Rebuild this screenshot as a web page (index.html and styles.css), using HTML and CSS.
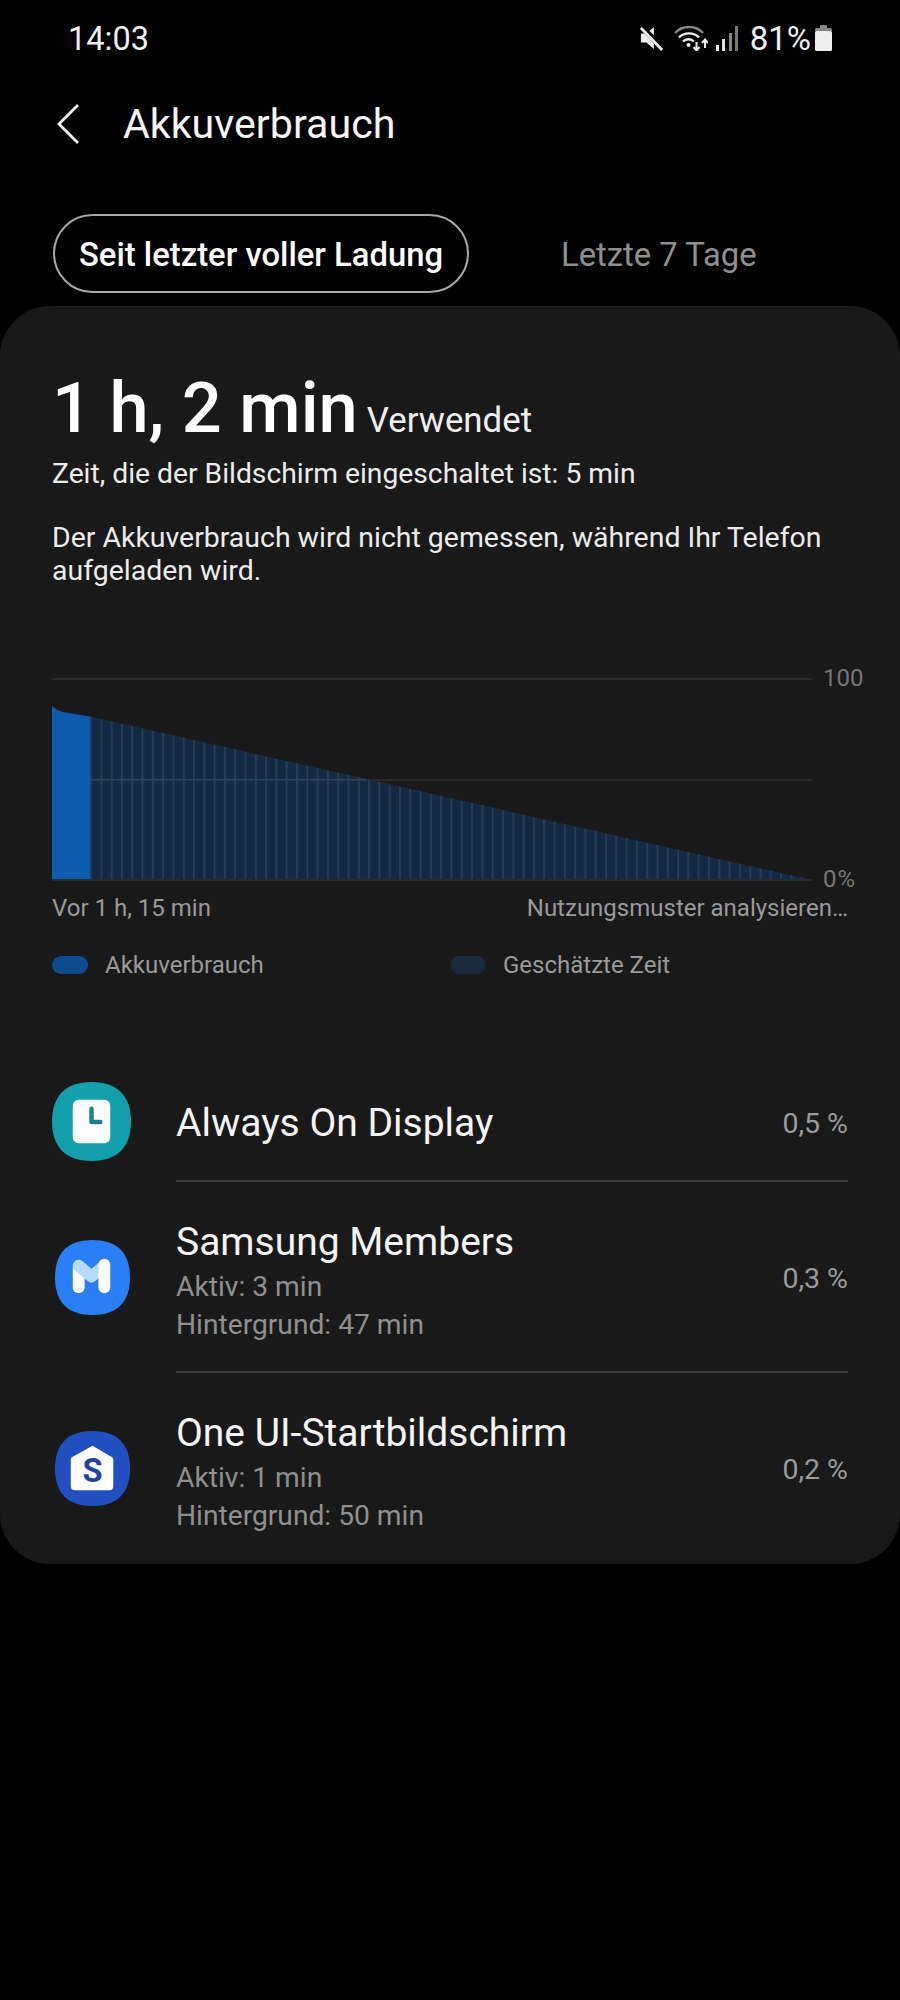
FILE: index.html
```html
<!DOCTYPE html>
<html lang="de">
<head>
<meta charset="utf-8">
<title>Akkuverbrauch</title>
<link rel="stylesheet" href="styles.css">
</head>
<body>
<div class="status">
  <span class="clock">14:03</span>
  <div class="status-right">
    <svg class="ic-mute" width="24" height="26" viewBox="0 0 26 28"><path d="M1 9h6l8-7v24l-8-7H1z" fill="#eee"/><path d="M2 2l23 24" stroke="#000" stroke-width="6"/><path d="M1 3l23 24" stroke="#eee" stroke-width="3"/></svg>
    <svg class="ic-wifi" width="34" height="26" viewBox="0 0 34 26"><path d="M1 8C8 0 22 0 29 8" fill="none" stroke="#888" stroke-width="2.400"/><path d="M5 12.500C10 7 20 7 25 12.500M9 16.500c3-3 8-3 11 0" fill="none" stroke="#eee" stroke-width="2.400"/><circle cx="14.500" cy="20" r="2" fill="#eee"/><path d="M22.500 17v8m-3-3l3 3.500 3-3.500" fill="none" stroke="#eee" stroke-width="2"/><path d="M31 23v-8m-3 3l3-3.500 3 3.500" fill="none" stroke="#eee" stroke-width="2"/></svg>
    <svg class="ic-signal" width="22" height="25" viewBox="0 0 22 25"><rect x="0" y="19" width="3" height="6" fill="#eee"/><rect x="6" y="13" width="3" height="12" fill="#ddd"/><rect x="13" y="7" width="3" height="18" fill="#888"/><rect x="19" y="0" width="3" height="25" fill="#777"/></svg>
    <span class="pct">81%</span>
    <svg class="ic-batt" width="17" height="26" viewBox="0 0 17 26"><rect x="5" y="0" width="7" height="4" rx="1" fill="#888"/><path d="M1.500 3h14A1.500 1.500 0 0 1 17 4.500V6H0V4.500A1.500 1.500 0 0 1 1.500 3z" fill="#888"/><rect x="0" y="6" width="17" height="20" rx="1.500" fill="#eee"/></svg>
  </div>
</div>

<header class="head">
  <svg class="back" width="24" height="42" viewBox="0 0 24 42"><path d="M21 2L2 21l19 19" fill="none" stroke="#f2f2f2" stroke-width="2.800"/></svg>
  <h1>Akkuverbrauch</h1>
</header>

<nav class="tabs">
  <div class="tab active">Seit letzter voller Ladung</div>
  <div class="tab">Letzte 7 Tage</div>
</nav>

<main class="card">
  <div class="used"><span class="big">1 h, 2 min</span><span class="used-label">Verwendet</span></div>
  <p class="line">Zeit, die der Bildschirm eingeschaltet ist: 5 min</p>
  <p class="note">Der Akkuverbrauch wird nicht gemessen, während Ihr Telefon aufgeladen wird.</p>

  <section class="chart">
    <svg class="plot" width="760" height="204" viewBox="0 0 760 204">
      <defs>
        <pattern id="stripes" x="38" y="0" width="10.300" height="204" patternUnits="userSpaceOnUse">
          <rect width="10.300" height="204" fill="#142a44"/>
          <rect x="0" width="2" height="204" fill="#253e59"/>
        </pattern>
      </defs>
      <rect x="0" y="1" width="760" height="2" fill="#2a2a2a"/>
      <rect x="0" y="102" width="760" height="2" fill="#2a2a2a"/>
      <path d="M38 39.500L760 203H38z" fill="url(#stripes)"/>
      <rect x="38" y="102" width="277" height="1.500" fill="#2e4459"/>
      <path d="M0 29l5 4 6 2 27 4.500V203H0z" fill="#0e5cad"/>
      <rect x="0" y="202" width="760" height="2" fill="#2a2a2a"/>
    </svg>
    <span class="axis axis-top">100</span>
    <span class="axis axis-bottom">0%</span>
    <div class="labels"><span>Vor 1 h, 15 min</span><span>Nutzungsmuster analysieren…</span></div>
  </section>

  <div class="legend">
    <div class="legend-item"><i class="dot dot-a"></i>Akkuverbrauch</div>
    <div class="legend-item"><i class="dot dot-b"></i>Geschätzte Zeit</div>
  </div>

  <ul class="apps">
    <li class="app app-single">
      <svg class="icon icon-aod" width="79" height="79" viewBox="0 0 80 80"><path d="M40 0C66 0 80 14 80 40S66 80 40 80 0 66 0 40 14 0 40 0z" fill="#12a0ac"/><rect x="21" y="18" width="38" height="44" rx="6" fill="#fff"/><path d="M40 27v13.500h9" fill="none" stroke="#1a7f8e" stroke-width="4.500" stroke-linecap="round" stroke-linejoin="round"/></svg>
      <div class="app-text"><div class="app-name">Always On Display</div></div>
      <span class="app-pct">0,5 %</span>
    </li>
    <li class="app">
      <svg class="icon" width="75" height="75" viewBox="0 0 76 76"><path d="M38 0C63 0 76 13 76 38S63 76 38 76 0 63 0 38 13 0 38 0z" fill="#2a7ff6"/><path d="M24 28v20" stroke="#fff" stroke-width="12" stroke-linecap="round"/><path d="M24 26l13 11 13-11" fill="none" stroke="#b5dcfb" stroke-width="12" stroke-linecap="round" stroke-linejoin="round"/><path d="M50 25v23" stroke="#fff" stroke-width="12" stroke-linecap="round"/></svg>
      <div class="app-text"><div class="app-name">Samsung Members</div><div class="app-sub">Aktiv: 3 min</div><div class="app-sub">Hintergrund: 47 min</div></div>
      <span class="app-pct">0,3 %</span>
    </li>
    <li class="app">
      <svg class="icon" width="75" height="75" viewBox="0 0 76 76"><path d="M38 0C63 0 76 13 76 38S63 76 38 76 0 63 0 38 13 0 38 0z" fill="#2350c0"/><path d="M38 15l19 11a3 3 0 0 1 2 3v27a4 4 0 0 1-4 4H20a4 4 0 0 1-4-4V29a3 3 0 0 1 2-3z" fill="#fff"/><text class="logo-s" x="38" y="52" text-anchor="middle">S</text></svg>
      <div class="app-text"><div class="app-name">One UI-Startbildschirm</div><div class="app-sub">Aktiv: 1 min</div><div class="app-sub">Hintergrund: 50 min</div></div>
      <span class="app-pct">0,2 %</span>
    </li>
  </ul>
</main>
</body>
</html>
```
FILE: styles.css
```css
* { box-sizing: border-box; }
html, body { margin: 0; padding: 0; }
body { width: 900px; height: 2000px; background: #000; color: #fff; font-family: Roboto, "Noto Sans", sans-serif; overflow: hidden; }

.status { height: 76px; display: flex; justify-content: space-between; align-items: center; padding: 0 68px; }
.clock { font-size: 32.5px; color: #f0f0f0; padding-top: 2px; }
.status-right { display: flex; align-items: center; }
.ic-wifi { margin-left: 10px; }
.ic-signal { margin-left: 8px; }
.pct { font-size: 33px; color: #f0f0f0; margin-left: 12px; }
.ic-batt { margin-left: 4px; }

.head { height: 96px; display: flex; align-items: center; padding-left: 57px; }
.head h1 { margin: 0 0 0 42px; font-size: 41.2px; font-weight: 400; color: #f5f5f5; }

.tabs { height: 134px; display: flex; align-items: flex-start; padding: 42px 0 0 53px; }
.tab { height: 79px; line-height: 78px; border: 2px solid transparent; font-size: 32.8px; color: #8f8f8f; margin-left: 90px; }
.tab.active { width: 416px; margin-left: 0; border-color: #a8a8a8; border-radius: 40px; color: #fff; font-weight: 500; text-align: center; }

.card { width: 900px; height: 1258px; background: #191919; border-radius: 50px; padding: 61px 52px 0; }
.used { display: flex; align-items: baseline; height: 82px; }
.big { font-size: 70.4px; font-weight: 500; line-height: 82px; }
.used-label { font-size: 34.8px; margin-left: 9px; color: #efefef; }
.line { margin: 8px 0 0; font-size: 28.25px; line-height: 34px; color: #ececec; }
.note { margin: 30px 0 0; font-size: 28.45px; line-height: 33px; color: #ececec; width: 796px; }

.chart { position: relative; margin-top: 90px; height: 250px; }
.plot { display: block; }
.axis { position: absolute; left: 771px; font-size: 24px; color: #757575; line-height: 28px; }
.axis-top { top: -13px; }
.axis-bottom { top: 188px; letter-spacing: 1px; }
.labels { display: flex; justify-content: space-between; width: 796px; margin-top: 12px; font-size: 24px; line-height: 30px; color: #9a9a9a; }

.legend { display: flex; margin-top: 23px; font-size: 24px; line-height: 30px; color: #9a9a9a; }
.legend-item { display: flex; align-items: center; width: 398px; }
.dot { width: 36px; height: 18px; border-radius: 9px; margin-right: 17px; }
.dot-a { background: #0f4c8f; }
.dot-b { background: #1c2a3d; }

.apps { list-style: none; margin: 85px 0 0; padding: 0; }
.app { position: relative; display: flex; align-items: center; height: 191px; }
.app-single { height: 116px; }
.app + .app::before { content: ""; position: absolute; top: -1px; left: 124px; right: 0; height: 2px; background: #3d3d3d; }
.icon { flex: none; margin-left: 3px; margin-top: 2px; }
.icon-aod { margin-left: 0; margin-top: 0; margin-bottom: 3px; }
.logo-s { font-family: Roboto, sans-serif; font-size: 33px; font-weight: 700; fill: #1f439f; }
.app-text { position: absolute; left: 124px; padding-top: 10px; }
.app-single .app-text { padding-top: 0; }
.app-name { font-size: 39px; line-height: 44px; color: #f5f5f5; margin-bottom: 4px; }
.app-single .app-name { margin-bottom: 0; }
.app-sub { font-size: 28.2px; line-height: 38px; color: #8f8f8f; }
.app-pct { margin-left: auto; font-size: 28.5px; color: #9a9a9a; padding-top: 3px; }
.app-single .app-pct { padding-top: 0; }
```
